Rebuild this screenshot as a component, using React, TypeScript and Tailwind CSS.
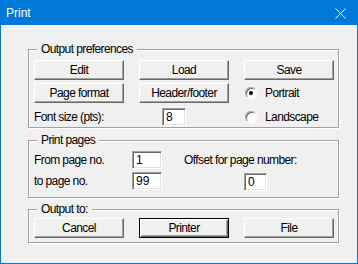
import type { ReactNode } from "react";

const font = { fontFamily: '"Liberation Sans", Arial, sans-serif' };

function Btn({ label, primary }: { label: string; primary?: boolean }) {
  return (
    <button
      type="button"
      className={
        "h-[20px] w-[90px] bg-[#f0f0f0] text-[12px] tracking-[-0.6px] text-black " +
        (primary
          ? "border border-black shadow-[inset_1px_1px_0_white,inset_-1px_-1px_0_#696969,inset_-2px_-2px_0_#a0a0a0]"
          : "border-t border-l border-white border-r border-b border-r-[#696969] border-b-[#696969] shadow-[inset_-1px_-1px_0_#a0a0a0]")
      }
    >
      {label}
    </button>
  );
}

function Field({ value, width }: { value: string; width: string }) {
  return (
    <div
      className={
        "h-[18px] border border-t-[#a0a0a0] border-l-[#a0a0a0] border-r-white border-b-white bg-white pl-[3px] text-[12px] leading-[16px] shadow-[inset_1px_1px_0_#696969,inset_-1px_-1px_0_#e3e3e3] " +
        width
      }
    >
      {value}
    </div>
  );
}

function Radio({ label, checked }: { label: string; checked?: boolean }) {
  return (
    <div className="flex items-center gap-[8px] pl-[1px]">
      <span className="flex h-[12px] w-[12px] items-center justify-center rounded-full border border-t-[#a0a0a0] border-l-[#a0a0a0] border-r-white border-b-white bg-white shadow-[inset_1px_1px_0_#696969]">
        {checked && <span className="h-[4px] w-[4px] rounded-full bg-black" />}
      </span>
      <span className="text-[12px] tracking-[-0.6px]">{label}</span>
    </div>
  );
}

function Group({ title, children, className }: { title: string; children: ReactNode; className: string }) {
  return (
    <div
      className={
        "relative ml-[27px] w-[311px] border border-[#a0a0a0] shadow-[1px_1px_0_white,inset_1px_1px_0_white] " +
        className
      }
    >
      <span className="absolute -top-[8px] left-[8px] bg-[#f0f0f0] px-[4px] text-[12px] leading-[14px] tracking-[-0.6px]">
        {title}
      </span>
      {children}
    </div>
  );
}

export default function App() {
  return (
    <div
      style={font}
      className="flex h-[264px] w-[358px] flex-col border border-[#0078d7] bg-[#f0f0f0] text-black"
    >
      <div className="flex h-[24px] shrink-0 items-center justify-between bg-[#0078d7] pl-[5px] pr-[11px] text-white">
        <span className="text-[12px]">Print</span>
        <svg width="11" height="11" viewBox="0 0 11 11">
          <path d="M0.5 0.5 L10.5 10.5 M10.5 0.5 L0.5 10.5" stroke="white" strokeWidth="1" />
        </svg>
      </div>

      <Group title="Output preferences" className="mt-[24px] h-[79px] pl-[5px] pt-[10px]">
        <div className="grid grid-cols-[90px_90px_90px] gap-x-[15px] gap-y-[3px]">
          <Btn label="Edit" />
          <Btn label="Load" />
          <Btn label="Save" />
          <Btn label="Page format" />
          <Btn label="Header/footer" />
          <Radio label="Portrait" checked />
          <div className="col-span-2 mt-[1px] flex items-center">
            <span className="w-[128px] text-[12px] tracking-[-0.6px]">Font size (pts):</span>
            <Field value="8" width="w-[24px]" />
          </div>
          <div className="mt-[2px]">
            <Radio label="Landscape" />
          </div>
        </div>
      </Group>

      <Group title="Print pages" className="mt-[12px] h-[58px] pl-[5px] pt-[10px]">
        <div className="flex">
          <div className="flex w-[150px] flex-col gap-[3px]">
            <div className="flex items-center">
              <span className="w-[98px] text-[12px] tracking-[-0.6px]">From page no.</span>
              <Field value="1" width="w-[30px]" />
            </div>
            <div className="flex items-center">
              <span className="w-[98px] text-[12px] tracking-[-0.6px]">to page no.</span>
              <Field value="99" width="w-[30px]" />
            </div>
          </div>
          <div className="flex flex-col">
            <span className="mt-[1px] h-[21px] text-[12px] leading-[17px] tracking-[-0.6px]">Offset for page number:</span>
            <div className="ml-[60px]">
              <Field value="0" width="w-[23px]" />
            </div>
          </div>
        </div>
      </Group>

      <Group title="Output to:" className="mt-[11px] h-[34px] pl-[5px] pt-[8px]">
        <div className="flex gap-[15px]">
          <Btn label="Cancel" />
          <Btn label="Printer" primary />
          <Btn label="File" />
        </div>
      </Group>
    </div>
  );
}
